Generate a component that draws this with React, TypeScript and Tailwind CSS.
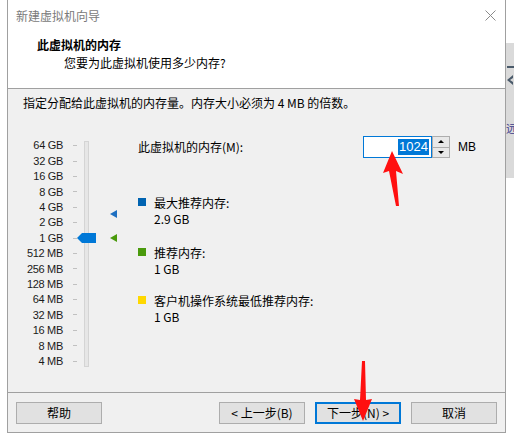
import React from 'react';

const scale = ['64 GB', '32 GB', '16 GB', '8 GB', '4 GB', '2 GB', '1 GB', '512 MB', '256 MB', '128 MB', '64 MB', '32 MB', '16 MB', '8 MB', '4 MB'];

const legends = [
  { color: 'bg-[#0063b1]', label: '最大推荐内存:', value: '2.9 GB', mt: 'mt-[37px]' },
  { color: 'bg-[#4a9a0c]', label: '推荐内存:', value: '1 GB', mt: 'mt-[18px]' },
  { color: 'bg-[#ffd800]', label: '客户机操作系统最低推荐内存:', value: '1 GB', mt: 'mt-[16px]' },
];

function Button({ children, primary }: { children: React.ReactNode; primary?: boolean }) {
  return (
    <div
      className={
        'w-[86px] h-[22px] flex items-center justify-center bg-[#e1e1e1] text-[12px] text-black ' +
        (primary ? 'border-2 border-[#0078d7]' : 'border border-[#adadad]')
      }
    >
      {children}
    </div>
  );
}

export default function App() {
  return (
    <div className="relative w-[514px] h-[441px] bg-white flex overflow-hidden font-['Noto_Sans_CJK_SC',sans-serif] text-black">
      {/* wizard window */}
      <div className="ml-[7px] w-[499px] h-[433px] shrink-0 border-x border-b border-[#a0a0a0] flex flex-col">
        <div className="h-[30px] shrink-0 bg-white flex items-center justify-between pl-[8px] pr-[9px] pt-px">
          <span className="text-[12px] text-[#7a7a7a]">新建虚拟机向导</span>
          <svg width="11" height="11" viewBox="0 0 11 11">
            <path d="M0.5 0.5 L10.5 10.5 M10.5 0.5 L0.5 10.5" stroke="#8a8a8a" strokeWidth="1" />
          </svg>
        </div>

        <div className="h-[59px] shrink-0 bg-white border-b border-[#a0a0a0] pl-[29px] pt-[6px]">
          <div className="text-[12px] font-bold leading-[18px]">此虚拟机的内存</div>
          <div className="text-[12px] leading-[18px] pl-[27px]">您要为此虚拟机使用多少内存?</div>
        </div>

        <div className="flex-1 bg-[#f0f0f0] flex flex-col">
          <div className="shrink-0 pl-[15px] pt-[6px] text-[12px] leading-[16px]">指定分配给此虚拟机的内存量。内存大小必须为 4 MB 的倍数。</div>

          <div className="shrink-0 flex mt-[25px] h-[256px]">
            {/* slider scale */}
            <div className="relative w-[122px] pt-[2px]">
              <div className="absolute left-[76px] top-[5px] w-[5px] h-[226px] bg-[#e6e6e6] border border-[#d4d4d4]" />
              {scale.map((s) => (
                <div key={s} className="h-[15.4px] flex items-center">
                  <span className="w-[55px] text-right text-[11px] font-['Liberation_Sans',sans-serif] tracking-[-0.3px] text-[#1a1a1a]">{s}</span>
                  <span className="ml-[10px] w-[4px] h-px bg-[#c0c0c0]" />
                </div>
              ))}
              <div className="absolute left-[69px] top-[97px] flex items-center">
                <div className="w-0 h-0 border-y-[5px] border-y-transparent border-r-[5px] border-r-[#0078d7]" />
                <div className="w-[14px] h-[10px] bg-[#0078d7]" />
              </div>
              <div className="absolute left-[102px] top-[74px] w-0 h-0 border-y-[4px] border-y-transparent border-r-[7px] border-r-[#1e6fc1]" />
              <div className="absolute left-[102px] top-[98px] w-0 h-0 border-y-[4px] border-y-transparent border-r-[7px] border-r-[#4a9a0c]" />
            </div>

            {/* right column */}
            <div className="ml-[8px] flex flex-col">
              <div className="flex items-center h-[22px]">
                <span className="w-[225px] text-[12px]">此虚拟机的内存(M):</span>
                <div className="w-[69px] h-[22px] border border-[#0078d7] bg-white flex items-center justify-end pr-[2px]">
                  <span className="bg-[#0078d7] text-white text-[13px] leading-[16px] px-px font-['Liberation_Sans',sans-serif]">1024</span>
                </div>
                <div className="w-[18px] h-[22px] border border-[#adadad] bg-[#f0f0f0] flex flex-col">
                  <div className="flex-1 border-b border-[#adadad] bg-[#e8e8e8] flex items-center justify-center">
                    <div className="w-0 h-0 border-x-[3px] border-x-transparent border-b-[3px] border-b-black" />
                  </div>
                  <div className="flex-1 bg-[#e8e8e8] flex items-center justify-center">
                    <div className="w-0 h-0 border-x-[3px] border-x-transparent border-t-[3px] border-t-black" />
                  </div>
                </div>
                <span className="ml-[8px] text-[12px] font-['Liberation_Sans',sans-serif]">MB</span>
              </div>

              {legends.map((l) => (
                <div key={l.label} className={'flex ' + l.mt}>
                  <div className={'w-[8px] h-[8px] mt-[3px] ' + l.color} />
                  <div className="ml-[8px] text-[12px] leading-[16px]">
                    <div>{l.label}</div>
                    <div>{l.value}</div>
                  </div>
                </div>
              ))}
            </div>
          </div>

          <div className="mt-auto shrink-0 border-t border-[#a0a0a0] h-[40px] flex items-start pt-[9px] pl-[8px] pr-[8px] gap-[10px]">
            <Button>帮助</Button>
            <div className="flex-1" />
            <Button>&lt; 上一步(B)</Button>
            <Button primary>下一步(N) &gt;</Button>
            <Button>取消</Button>
          </div>
        </div>
      </div>

      {/* partly visible window on the right */}
      <div className="flex-1 flex flex-col overflow-hidden">
        <div className="h-[43px] shrink-0" />
        <div className="h-[135px] shrink-0 bg-[#dadada] relative">
          <div className="absolute left-[1px] top-[23px] w-[7px] h-[2px] bg-[#4a5a6a]" />
          <svg className="absolute left-[1px] top-[32px]" width="7" height="10" viewBox="0 0 7 10">
            <path d="M6 0 L0 5 L6 10 L6 7 L3 5 L6 3 Z" fill="#4a5a6a" />
          </svg>
          <span className="absolute left-0 top-[78px] text-[11px] leading-[14px] text-[#3a3a8a]">远</span>
        </div>
      </div>

      {/* annotation arrows */}
      <svg className="absolute inset-0 pointer-events-none" width="514" height="441" viewBox="0 0 514 441">
        <path d="M392 151 L403 174 L396 171 L399 206 L396 206 L389 171 L383 173 Z" fill="#ff1010" />
        <path d="M362 361 L365 361 L366 400 L372 399 L363 421 L354 399 L360 400 Z" fill="#ff1010" />
      </svg>
    </div>
  );
}
